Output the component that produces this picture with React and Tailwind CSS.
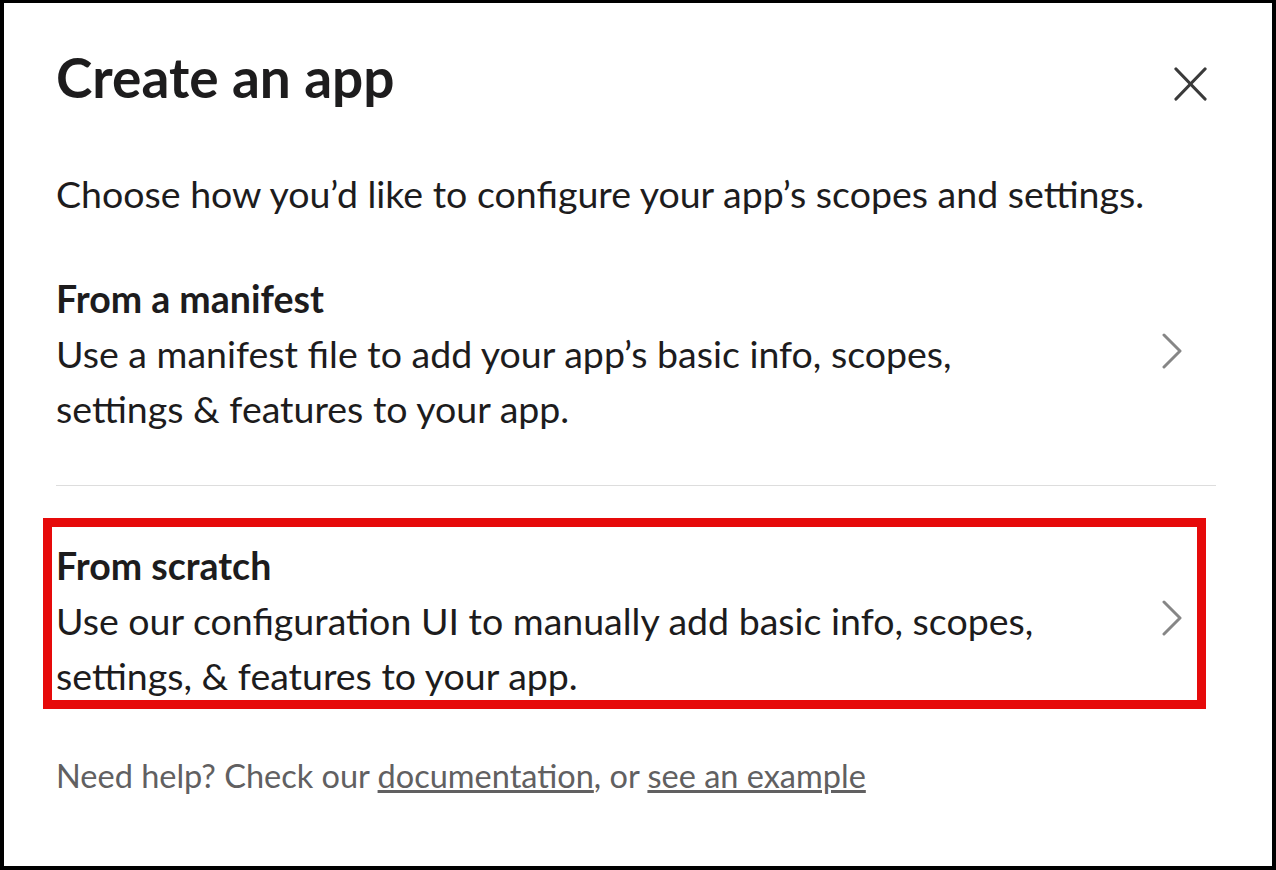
import React from 'react';

function Chevron() {
  return (
    <svg width="20" height="36" viewBox="0 0 20 36" fill="none" className="shrink-0">
      <polyline points="2,2 18,18 2,34" stroke="#868686" strokeWidth="3" strokeLinecap="round" strokeLinejoin="round" />
    </svg>
  );
}

function Option({ title, lines, highlight }) {
  return (
    <div className="relative flex items-center justify-between">
      <div className="text-[37.5px] leading-[55px] text-[#1d1c1d] whitespace-nowrap">
        <div className="font-bold">{title}</div>
        {lines.map((l) => (
          <div key={l}>{l}</div>
        ))}
      </div>
      <div className="mr-[34px] pb-[5px]">
        <Chevron />
      </div>
      {/* annotation box */}
      {highlight && (
        <div className="absolute -left-[13px] -top-[20px] right-[10px] -bottom-[6px] border-[9px] border-[#e60a0a] pointer-events-none" />
      )}
    </div>
  );
}

export default function App() {
  return (
    <div className="w-[1276px] h-[870px] bg-white border-4 border-t-[3px] border-black font-['Lato','Noto_Sans',sans-serif] overflow-hidden">
      <div className="pl-[52px] pr-[56px]">
        {/* header */}
        <div className="flex items-start justify-between pt-[42px]">
          <h1 className="text-[55px] leading-[64px] font-bold text-[#1d1c1d]">Create an app</h1>
          <button className="mr-[9px] mt-[22px]">
            <svg width="33" height="34" viewBox="0 0 33 34" fill="none" className="block">
              <line x1="2" y1="2" x2="31" y2="32" stroke="#3a3a3a" strokeWidth="3.2" strokeLinecap="round" />
              <line x1="31" y1="2" x2="2" y2="32" stroke="#3a3a3a" strokeWidth="3.2" strokeLinecap="round" />
            </svg>
          </button>
        </div>

        <p className="mt-[57px] text-[37.5px] leading-[55px] text-[#1d1c1d]">
          Choose how you’d like to configure your app’s scopes and settings.
        </p>

        <div className="mt-[50px]">
          <Option
            title="From a manifest"
            lines={['Use a manifest file to add your app’s basic info, scopes,', 'settings & features to your app.']}
          />
        </div>

        <div className="mt-[49px] h-px bg-[#dddddd]" />

        <div className="mt-[52px]">
          <Option
            title="From scratch"
            lines={['Use our configuration UI to manually add basic info, scopes,', 'settings, & features to your app.']}
            highlight
          />
        </div>

        <p className="mt-[51px] text-[32.5px] leading-[44px] text-[#616061]">
          Need help? Check our <a className="underline">documentation</a>, or <a className="underline">see an example</a>
        </p>
      </div>
    </div>
  );
}
